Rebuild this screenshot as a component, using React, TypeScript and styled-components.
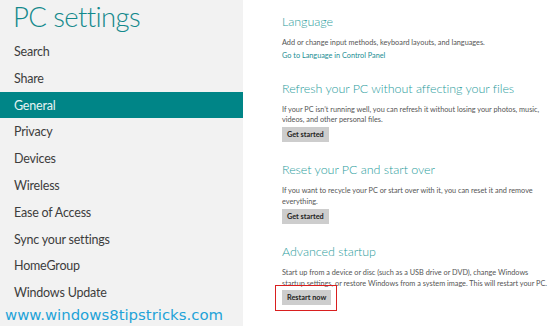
import React from "react";
import styled, { createGlobalStyle } from "styled-components";

const GlobalStyle = createGlobalStyle`
  html, body {
    margin: 0;
    padding: 0;
    background: #ffffff;
  }
  body {
    font-family: Lato, "Open Sans", "Liberation Sans", sans-serif;
  }
`;

const Page = styled.div`
  display: flex;
  width: 549px;
  height: 326px;
  overflow: hidden;
`;

const Sidebar = styled.div`
  width: 243px;
  flex-shrink: 0;
  background: #f2f2f2;
  display: flex;
  flex-direction: column;
`;

const Title = styled.h1`
  margin: 0;
  height: 40px;
  padding-left: 13px;
  font-size: 27.5px;
  font-weight: 300;
  line-height: 34px;
  color: #12898c;
  letter-spacing: -0.6px;
`;

const NavList = styled.ul`
  list-style: none;
  margin: 0;
  padding: 0;
`;

const NavItem = styled.li<{ $active?: boolean }>`
  height: 26.8px;
  display: flex;
  align-items: center;
  padding-left: 14px;
  font-size: 12.5px;
  letter-spacing: -0.2px;
  color: ${({ $active }) => ($active ? "#e6f3f3" : "#3d3d3d")};
  background: ${({ $active }) => ($active ? "#008587" : "transparent")};
`;

const Watermark = styled.div`
  margin-top: -2px;
  padding-left: 5px;
  font-family: "DejaVu Sans", Verdana, sans-serif;
  font-size: 14.9px;
  line-height: 22px;
  color: #1fa3d8;
  white-space: nowrap;
`;

const Content = styled.div`
  flex: 1;
  padding: 12px 0 0 39px;
  display: flex;
  flex-direction: column;
  gap: 18px;
`;

const Section = styled.section<{ $tight?: boolean }>`
  display: flex;
  flex-direction: column;
  align-items: flex-start;
  margin-bottom: ${({ $tight }) => ($tight ? "-1.5px" : "0")};
`;

const Heading = styled.h2`
  margin: 0;
  font-size: 12.5px;
  font-weight: 300;
  line-height: 20px;
  letter-spacing: -0.05px;
  color: #2a9c9c;
  white-space: nowrap;
`;

const Desc = styled.p`
  margin: 6px 0 0;
  font-size: 7.3px;
  line-height: 10.8px;
  color: #555555;
  white-space: nowrap;
`;

const LinkText = styled.a`
  margin-top: 2.5px;
  font-size: 7.3px;
  line-height: 10.8px;
  color: #1b8e93;
  text-decoration: none;
`;

const Button = styled.button<{ $marked?: boolean }>`
  position: relative;
  margin-top: 1px;
  height: 15px;
  padding: 0 5px;
  border: none;
  background: #cdcdcd;
  color: #222222;
  font-family: Lato, "Open Sans", "Liberation Sans", sans-serif;
  font-size: 7.3px;
  font-weight: 700;
  line-height: 15px;
  cursor: pointer;

  &::after {
    content: "";
    display: ${({ $marked }) => ($marked ? "block" : "none")};
    position: absolute;
    top: -5px;
    left: -7px;
    right: -6px;
    bottom: -6px;
    border: 1px solid #d91f1f;
  }
`;

const navItems = [
  "Search",
  "Share",
  "General",
  "Privacy",
  "Devices",
  "Wireless",
  "Ease of Access",
  "Sync your settings",
  "HomeGroup",
  "Windows Update",
];

export default function App() {
  return (
    <>
      <GlobalStyle />
      <Page>
        <Sidebar>
          <Title>PC settings</Title>
          <NavList>
            {navItems.map((item) => (
              <NavItem key={item} $active={item === "General"}>
                {item}
              </NavItem>
            ))}
          </NavList>
          <Watermark>www.windows8tipstricks.com</Watermark>
        </Sidebar>
        <Content>
          <Section $tight>
            <Heading>Language</Heading>
            <Desc>Add or change input methods, keyboard layouts, and languages.</Desc>
            <LinkText href="#">Go to Language in Control Panel</LinkText>
          </Section>
          <Section>
            <Heading>Refresh your PC without affecting your files</Heading>
            <Desc>
              If your PC isn’t running well, you can refresh it without losing your photos, music,
              <br />
              videos, and other personal files.
            </Desc>
            <Button>Get started</Button>
          </Section>
          <Section>
            <Heading>Reset your PC and start over</Heading>
            <Desc>
              If you want to recycle your PC or start over with it, you can reset it and remove
              <br />
              everything.
            </Desc>
            <Button>Get started</Button>
          </Section>
          <Section>
            <Heading>Advanced startup</Heading>
            <Desc>
              Start up from a device or disc (such as a USB drive or DVD), change Windows
              <br />
              startup settings, or restore Windows from a system image. This will restart your PC.
            </Desc>
            <Button $marked>Restart now</Button>
          </Section>
        </Content>
      </Page>
    </>
  );
}
